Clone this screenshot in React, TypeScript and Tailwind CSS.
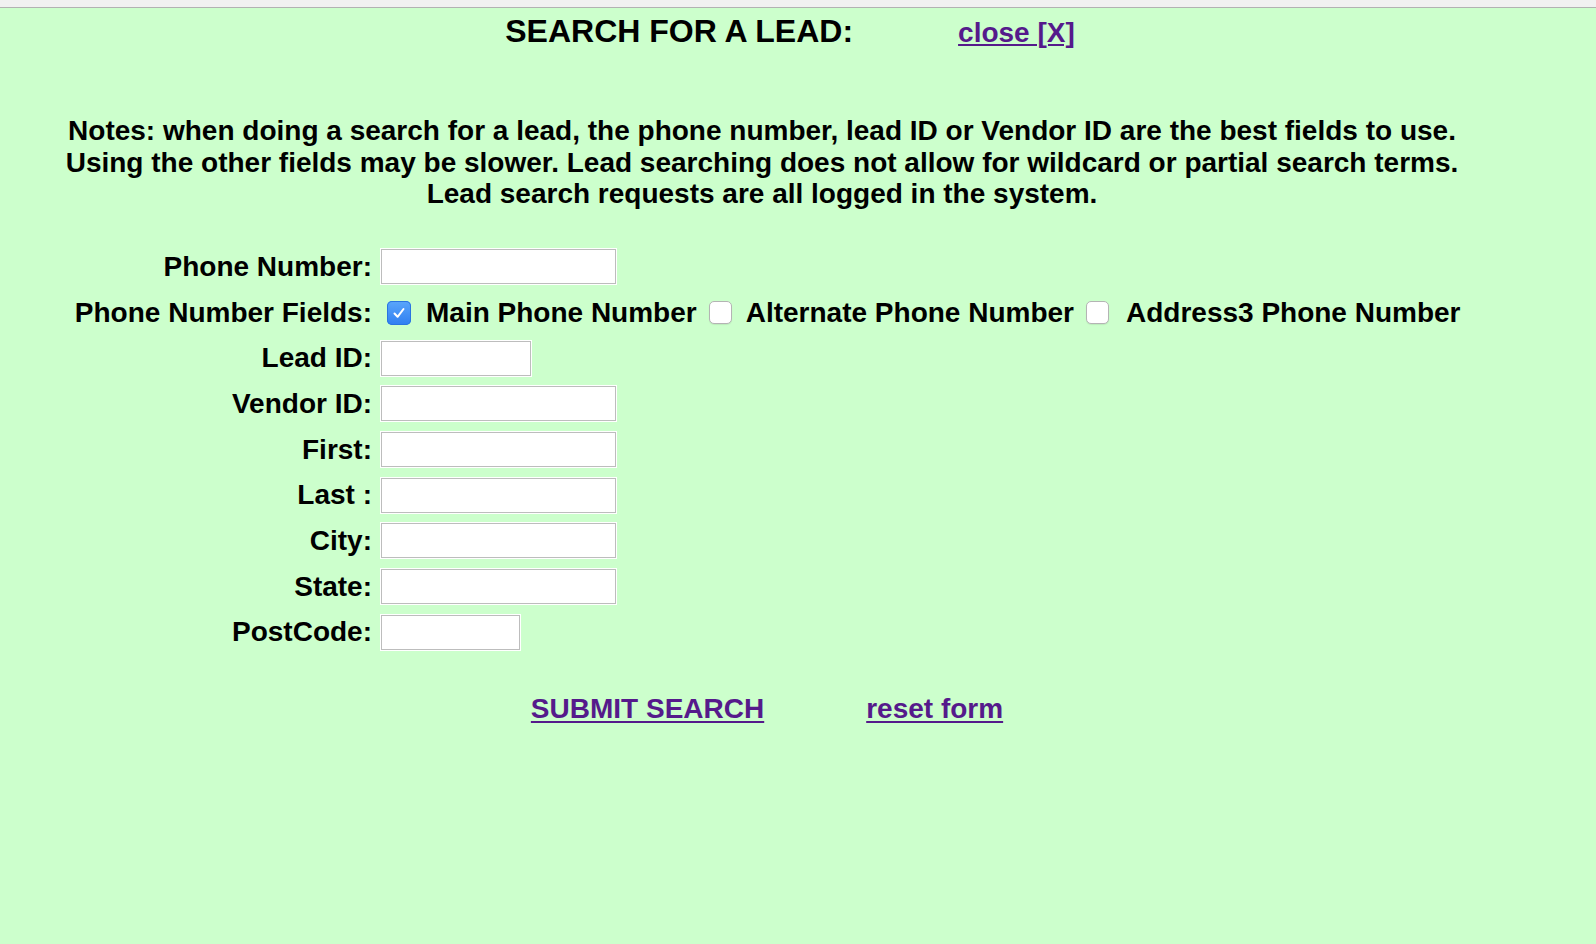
import React from "react";

const fields: { label: string; width: string }[] = [
  { label: "Phone Number:", width: "w-[235px]" },
  { label: "Phone Number Fields:", width: "" },
  { label: "Lead ID:", width: "w-[150px]" },
  { label: "Vendor ID:", width: "w-[235px]" },
  { label: "First:", width: "w-[235px]" },
  { label: "Last :", width: "w-[235px]" },
  { label: "City:", width: "w-[235px]" },
  { label: "State:", width: "w-[235px]" },
  { label: "PostCode:", width: "w-[139px]" },
];

function Checkbox({ checked }: { checked?: boolean }) {
  if (checked) {
    return (
      <span className="flex h-[24px] w-[24px] shrink-0 items-center justify-center rounded-[5px] bg-gradient-to-b from-[#5aa6fb] to-[#2f7ef1] shadow-[inset_0_0_0_1px_#2a74e0]">
        <svg width="14" height="14" viewBox="0 0 14 14" fill="none">
          <path
            d="M2.5 7.5 L5.6 10.8 L11.5 3"
            stroke="white"
            strokeWidth="2"
            strokeLinecap="round"
            strokeLinejoin="round"
          />
        </svg>
      </span>
    );
  }
  return (
    <span className="block h-[23px] w-[23px] shrink-0 rounded-[5px] border border-[#b4b4b4] bg-white shadow-[0_1px_1px_rgba(0,0,0,0.08)]" />
  );
}

function TextBox({ width }: { width: string }) {
  return (
    <input
      type="text"
      className={`${width} h-[35px] border border-[#bdbdbd] bg-white shadow-[0_0_0_1px_#ffffff] outline-none`}
    />
  );
}

function PhoneFields() {
  return (
    <div className="flex items-center">
      <span className="ml-[6px] block">
        <Checkbox checked />
      </span>
      <span className="ml-[15px]">Main Phone Number</span>
      <span className="ml-[12px] block">
        <Checkbox />
      </span>
      <span className="ml-[14px]">Alternate Phone Number</span>
      <span className="ml-[12px] block">
        <Checkbox />
      </span>
      <span className="ml-[17px]">Address3 Phone Number</span>
    </div>
  );
}

export default function App() {
  return (
    <div className="min-h-[944px] bg-[#ccffcc] font-['Liberation_Sans',Arial,sans-serif] text-black">
      <div className="h-[8px] border-b border-[#b2b2b2] bg-[#f1f1f1]" />

      <div className="w-[1524px]">
        <div className="flex items-baseline justify-center gap-[105px] pl-[56px] pt-[5px]">
          <span className="text-[32px] font-bold leading-[36px]">SEARCH FOR A LEAD:</span>
          <a
            href="#"
            className="text-[28px] font-bold leading-[32px] text-[#551a8b] underline decoration-2 underline-offset-[2px]"
          >
            close [X]
          </a>
        </div>

        <div className="mt-[66px] text-center text-[28px] font-bold leading-[31.5px]">
          <div>
            Notes: when doing a search for a lead, the phone number, lead ID or Vendor ID are the best fields to use.
          </div>
          <div>
            Using the other fields may be slower. Lead searching does not allow for wildcard or partial search terms.
          </div>
          <div>Lead search requests are all logged in the system.</div>
        </div>

        <div className="mt-[34.5px] grid grid-cols-[372px_auto] text-[28px] font-bold">
          {fields.map((f, i) => (
            <React.Fragment key={f.label}>
              <div className="flex h-[45.7px] items-center justify-end leading-[32px]">{f.label}</div>
              <div className="flex h-[45.7px] items-center pl-[9px] leading-[32px]">
                {i === 1 ? <PhoneFields /> : <TextBox width={f.width} />}
              </div>
            </React.Fragment>
          ))}
        </div>

        <div className="mt-[38px] flex justify-center gap-[102px] pl-[10px] text-[28px] font-bold leading-[32px]">
          <a href="#" className="text-[#551a8b] underline decoration-2 underline-offset-[3px]">
            SUBMIT SEARCH
          </a>
          <a href="#" className="text-[#551a8b] underline decoration-2 underline-offset-[3px]">
            reset form
          </a>
        </div>
      </div>
    </div>
  );
}
